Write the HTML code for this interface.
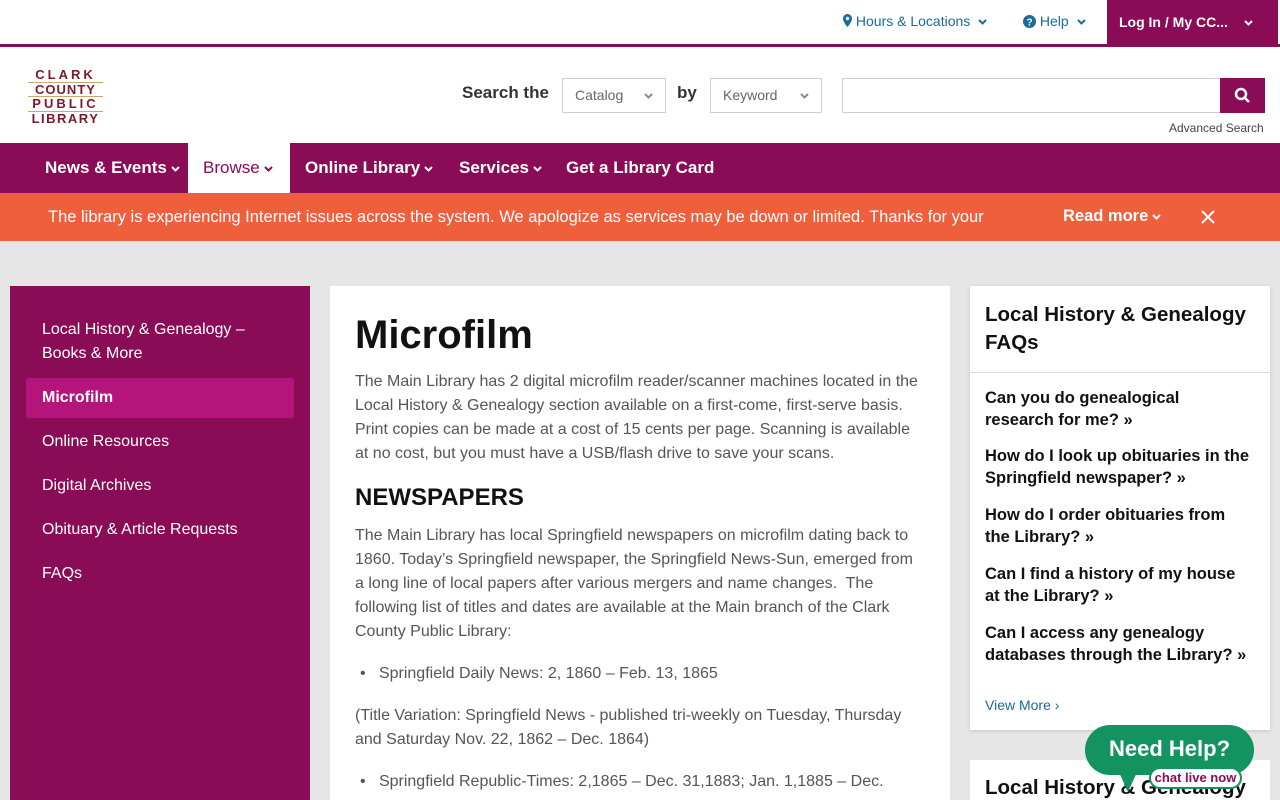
<!DOCTYPE html>
<html><head><meta charset="utf-8"><style>
*{box-sizing:border-box;margin:0;padding:0}
html,body{width:1280px;height:800px;overflow:hidden}
body{background:#e6e6e6;font-family:"Liberation Sans",sans-serif;position:relative}
.a{position:absolute}
.top{left:0;top:0;width:1280px;height:47px;background:#fff;border-bottom:3px solid #850f55}
.hdr{left:0;top:47px;width:1280px;height:96px;background:#fff}
.nav{left:0;top:143px;width:1280px;height:50px;background:#8a0c56}
.nav span{position:absolute;top:15px;color:#fff;font-weight:bold;font-size:17px}
.alert{left:0;top:193px;width:1280px;height:48px;background:#ef5f3c;color:#fff;font-size:16.5px}
.side{left:10px;top:286px;width:300px;height:520px;background:#8a0c56}
.side div{position:absolute;left:32px;color:#fff;font-size:16px;line-height:24px}
.main{left:330px;top:286px;width:620px;height:520px;background:#fff;color:#555;font-size:16px;line-height:24px}
.main p{position:absolute;left:25px;width:565px}
.faq{left:970px;top:286px;width:300px;height:444px;background:#fff;box-shadow:0 1px 4px rgba(0,0,0,.15)}
.faq .q{position:absolute;left:15px;width:272px;font-weight:bold;font-size:16.5px;line-height:22px;color:#111}
.sel{height:35px;border:1px solid #ccc;color:#666;font-size:14px;padding:8px 12px}
.chev{display:inline-block;width:9px;height:6px;margin-left:4px;vertical-align:middle}
</style></head><body>
<svg width="0" height="0" style="position:absolute"><defs><path id="cv" d="M1 1l3.5 3.5L8 1" fill="none" stroke="currentColor" stroke-width="2"/></defs></svg>
<div class="a top">
 <div class="a" style="left:843px;top:13px;color:#1a6a9a;font-size:14px"><svg width="9" height="13" style="vertical-align:-1px"><path d="M4.5 0a4.5 4.5 0 0 1 4.5 4.5C9 8 4.5 13 4.5 13S0 8 0 4.5A4.5 4.5 0 0 1 4.5 0z" fill="#1a6a9a"/><circle cx="4.5" cy="4.5" r="1.7" fill="#fff"/></svg> Hours &amp; Locations <svg class="chev" viewBox="0 0 9 6" style="color:#1a6a9a"><use href="#cv"/></svg></div>
 <div class="a" style="left:1023px;top:13px;color:#1a6a9a;font-size:14px"><svg width="13" height="13" style="vertical-align:-2px"><circle cx="6.5" cy="6.5" r="6.5" fill="#1a6a9a"/><text x="6.5" y="10.5" font-size="10" font-weight="bold" fill="#fff" text-anchor="middle" font-family="Liberation Sans">?</text></svg> Help <svg class="chev" viewBox="0 0 9 6" style="color:#1a6a9a"><use href="#cv"/></svg></div>
 <div class="a" style="left:1107px;top:0;width:171px;height:44px;background:#8a0c56;color:#fff;font-weight:bold;font-size:14px;padding:14px 12px">Log In / My CC... <svg class="chev" viewBox="0 0 9 6" style="color:#fff;margin-left:12px"><use href="#cv"/></svg></div>
</div>
<div class="a hdr">
 <div class="a" style="left:28px;top:21px;width:75px;color:#7a1a2a;font-weight:bold;font-size:13px;line-height:13.5px;letter-spacing:3px;text-align:center">
  <div style="border-bottom:1px solid #c9a96a">CLARK</div><div style="border-bottom:1px solid #c9a96a;letter-spacing:1px">COUNTY</div><div style="border-bottom:1px solid #c9a96a">PUBLIC</div><div style="letter-spacing:1.5px">LIBRARY</div>
 </div>
 <div class="a" style="left:462px;top:36px;font-size:17px;font-weight:bold;color:#333">Search the</div>
 <div class="a sel" style="left:562px;width:104px;top:31px">Catalog <svg class="chev" viewBox="0 0 9 6" style="float:right;margin-top:6px;color:#888"><use href="#cv"/></svg></div>
 <div class="a" style="left:677px;top:36px;font-size:17px;font-weight:bold;color:#333">by</div>
 <div class="a sel" style="left:710px;width:112px;top:31px">Keyword <svg class="chev" viewBox="0 0 9 6" style="float:right;margin-top:6px;color:#888"><use href="#cv"/></svg></div>
 <div class="a" style="left:842px;top:31px;width:380px;height:35px;border:1px solid #ccc"></div>
 <div class="a" style="left:1220px;top:31px;width:45px;height:35px;background:#8a0c56"><svg width="45" height="35"><circle cx="21" cy="16" r="5" fill="none" stroke="#fff" stroke-width="2.5"/><path d="M25 20l4 4" stroke="#fff" stroke-width="2.5"/></svg></div>
 <div class="a" style="left:1169px;top:74px;font-size:12px;color:#444">Advanced Search</div>
</div>
<div class="a nav">
 <span style="left:45px">News &amp; Events<svg class="chev" viewBox="0 0 9 6"><use href="#cv"/></svg></span>
 <div class="a" style="left:188px;top:0;width:102px;height:50px;background:#fff"></div>
 <span style="left:203px;color:#8a0c56;font-weight:normal">Browse<svg class="chev" viewBox="0 0 9 6"><use href="#cv"/></svg></span>
 <span style="left:305px">Online Library<svg class="chev" viewBox="0 0 9 6"><use href="#cv"/></svg></span>
 <span style="left:459px">Services<svg class="chev" viewBox="0 0 9 6"><use href="#cv"/></svg></span>
 <span style="left:566px">Get a Library Card</span>
</div>
<div class="a alert">
 <div class="a" style="left:48px;top:15px">The library is experiencing Internet issues across the system. We apologize as services may be down or limited. Thanks for your</div>
 <div class="a" style="left:1063px;top:14px;font-weight:bold">Read more<svg class="chev" viewBox="0 0 9 6"><use href="#cv"/></svg></div>
 <svg class="a" style="left:1200px;top:209px;position:fixed" width="16" height="16"><path d="M2 2l12 12M14 2L2 14" stroke="#fff" stroke-width="2"/></svg>
</div>
<div class="a side">
 <div style="top:32px">Local History &amp; Genealogy –<br>Books &amp; More</div>
 <div style="left:16px;top:92px;width:268px;height:40px;background:#b5157a;border-radius:3px;padding:8px 16px;font-weight:bold">Microfilm</div>
 <div style="top:144px">Online Resources</div>
 <div style="top:188px">Digital Archives</div>
 <div style="top:232px">Obituary &amp; Article Requests</div>
 <div style="top:276px">FAQs</div>
</div>
<div class="a main">
 <div class="a" style="left:25px;top:26px;font-size:40px;font-weight:bold;color:#111;line-height:46px">Microfilm</div>
 <p style="top:84px">The Main Library has 2 digital microfilm reader/scanner machines located in the Local History &amp; Genealogy section available on a first-come, first-serve basis. Print copies can be made at a cost of 15 cents per page. Scanning is available at no cost, but you must have a USB/flash drive to save your scans.</p>
 <div class="a" style="left:25px;top:200px;font-size:24px;font-weight:bold;color:#111">NEWSPAPERS</div>
 <p style="top:238px">The Main Library has local Springfield newspapers on microfilm dating back to 1860. Today’s Springfield newspaper, the Springfield News-Sun, emerged from a long line of local papers after various mergers and name changes.&nbsp; The following list of titles and dates are available at the Main branch of the Clark County Public Library:</p>
 <p style="top:376px;left:30px">•&nbsp;&nbsp; Springfield Daily News: 2, 1860 – Feb. 13, 1865</p>
 <p style="top:418px">(Title Variation: Springfield News - published tri-weekly on Tuesday, Thursday and Saturday Nov. 22, 1862 – Dec. 1864)</p>
 <p style="top:484px;left:30px">•&nbsp;&nbsp; Springfield Republic-Times: 2,1865 – Dec. 31,1883; Jan. 1,1885 – Dec.</p>
</div>
<div class="a faq">
 <div class="q" style="top:15px;font-size:20.5px;line-height:28px">Local History &amp; Genealogy FAQs</div>
 <div class="a" style="left:0;top:86px;width:300px;border-top:1px solid #ddd"></div>
 <div class="q" style="top:101px;width:265px">Can you do genealogical research for me? »</div>
 <div class="q" style="top:159px">How do I look up obituaries in the Springfield newspaper? »</div>
 <div class="q" style="top:218px;width:255px">How do I order obituaries from the Library? »</div>
 <div class="q" style="top:277px;width:255px">Can I find a history of my house at the Library? »</div>
 <div class="q" style="top:336px">Can I access any genealogy databases through the Library? »</div>
 <div class="a" style="left:15px;top:411px;color:#1a6a9a;font-size:14px">View More ›</div>
</div>
<div class="a" style="left:970px;top:760px;width:300px;height:40px;background:#fff">
 <div class="a" style="left:15px;top:16px;font-size:20.5px;font-weight:bold;color:#111">Local History &amp; Genealogy</div>
</div>
<div class="a" style="left:1085px;top:725px;width:169px;height:50px;background:#12935f;border-radius:25px;color:#fff;font-weight:bold;font-size:22px;text-align:center;padding-top:11px">Need Help?</div>
<div class="a" style="left:1118px;top:770px;width:0;height:0;border-left:10px solid transparent;border-right:10px solid transparent;border-top:22px solid #12935f"></div>
<div class="a" style="left:1149px;top:767px;width:93px;height:22px;background:#fff;border:2px solid #12935f;border-radius:11px;color:#8a0c56;font-weight:bold;font-size:13px;text-align:center;line-height:17px">chat live now</div>
</body></html>
